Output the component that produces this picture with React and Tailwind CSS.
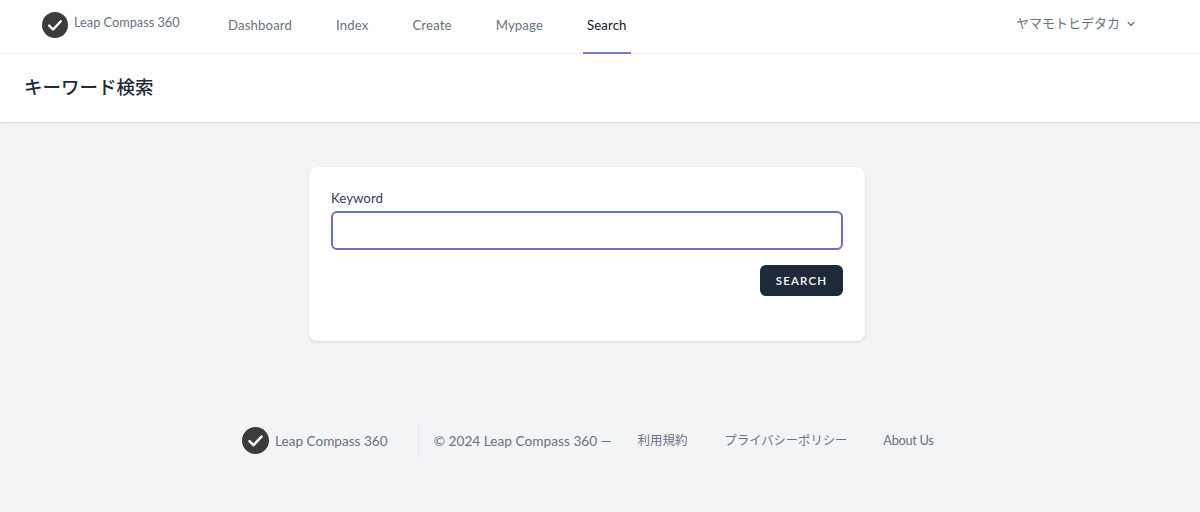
const sans = "font-['Lato','Noto_Sans_CJK_JP',sans-serif]";

const Logo = ({ className }) => (
    <svg viewBox="0 0 26 26" className={className}>
        <circle cx="13" cy="13" r="13" fill="#3c3c3e" />
        <path d="M7.2 13.6l3.9 3.9 7.7-8.2" fill="none" stroke="#fff" strokeWidth="2.4" strokeLinecap="round" strokeLinejoin="round" />
    </svg>
);

const NavLink = ({ children, active }) => (
    <a
        className={
            active
                ? "flex h-[54px] items-center border-b-2 border-[#7480d4] px-1 pb-px text-[13.2px] tracking-[0.01em] text-gray-900"
                : "flex h-[54px] items-center border-b-2 border-transparent px-1 pb-px text-[13.2px] tracking-[0.01em] text-gray-500"
        }
    >
        {children}
    </a>
);

const App = () => {
    return (
        <div className={`${sans} flex h-[512px] w-full flex-col overflow-hidden bg-gray-100`}>
            <nav className="flex h-[54px] shrink-0 border-b border-gray-100 bg-white pl-[42px] pr-[62px]">
                <div className="flex h-[50px] w-[182px] shrink-0 items-center gap-[6px]">
                    <Logo className="size-[26px]" />
                    <span className="mb-1 text-[12.75px] text-gray-500">Leap Compass 360</span>
                </div>
                <div className="flex gap-[36px]">
                    <NavLink>Dashboard</NavLink>
                    <NavLink>Index</NavLink>
                    <NavLink>Create</NavLink>
                    <NavLink>Mypage</NavLink>
                    <NavLink active>Search</NavLink>
                </div>
                <div className="ml-auto flex h-[47px] items-center gap-[4px] text-[13px] text-gray-500">
                    ヤマモトヒデタカ
                    <svg viewBox="0 0 20 20" fill="currentColor" className="size-[14px]">
                        <path d="M5.3 7.3a1 1 0 011.4 0L10 10.6l3.3-3.3a1 1 0 111.4 1.4l-4 4a1 1 0 01-1.4 0l-4-4a1 1 0 010-1.4z" />
                    </svg>
                </div>
            </nav>

            <header className="flex h-[68px] shrink-0 items-center bg-white px-6 shadow">
                <h1 className="text-[18.5px] font-medium text-gray-800">キーワード検索</h1>
            </header>

            <main className="flex pl-[309px] pt-[45px]">
                <div className="h-[174px] w-[556px] rounded-lg bg-white px-[22px] pt-[23px] shadow-sm">
                    <label className="block text-[13.3px] leading-4 text-gray-700">Keyword</label>
                    <input className="mt-[5px] block h-[39px] w-full rounded-md border-2 border-[#6a6fc4] bg-white outline-none" />
                    <div className="mt-[15px] flex justify-end">
                        <button className="h-[31px] w-[83px] rounded-md bg-gray-800 text-[11.5px] font-semibold tracking-widest text-white">
                            SEARCH
                        </button>
                    </div>
                </div>
            </main>

            <footer className="mt-[75px] flex h-[50px] items-center pl-[242px] text-gray-500">
                <Logo className="mb-[2px] size-[27px]" />
                <span className="ml-[6px] text-[13.6px] text-gray-500">Leap Compass 360</span>
                <div className="ml-[30px] h-[34px] w-px bg-gray-200" />
                <span className="ml-[15px] text-[13.7px]">© 2024 Leap Compass 360 —</span>
                <span className="ml-[26px] text-[12.5px]">利用規約</span>
                <span className="ml-[37px] text-[12.3px]">プライバシーポリシー</span>
                <span className="ml-[36px] text-[12.8px] tracking-tight">About Us</span>
            </footer>
        </div>
    );
};

export default App;
